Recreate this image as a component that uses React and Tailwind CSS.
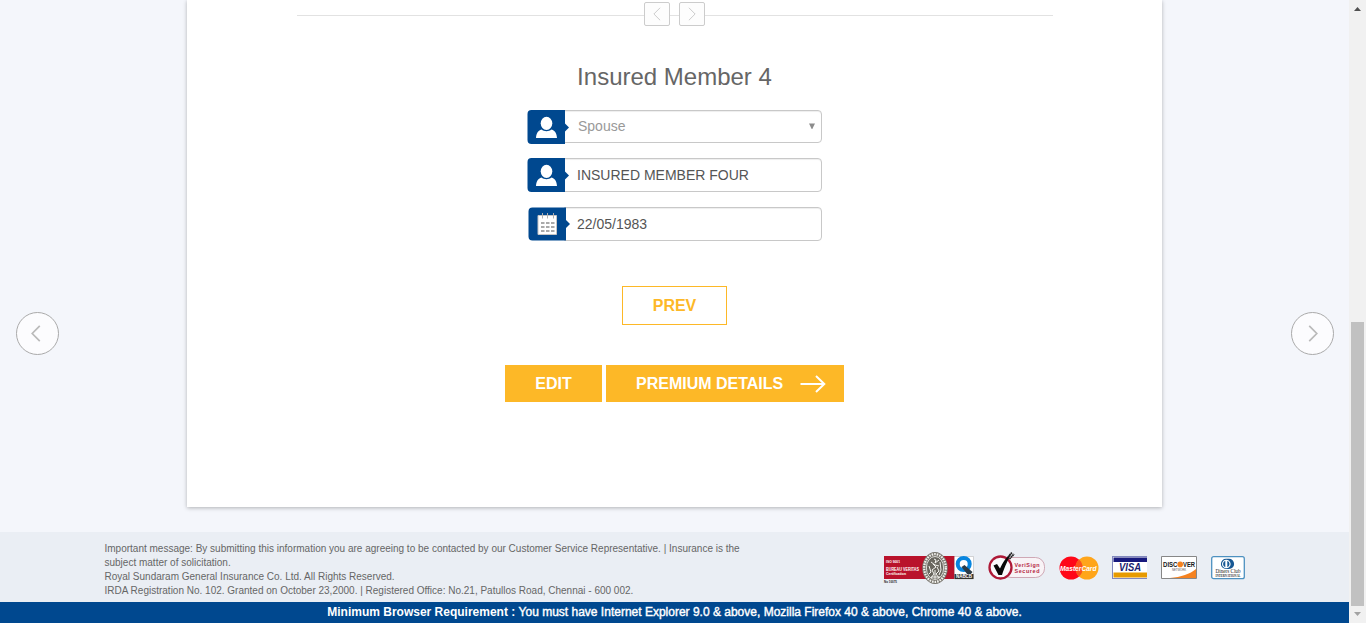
import React from "react";

const Chevron = ({ dir = "left", className }) => (
  <svg viewBox="0 0 10 18" className={className} fill="none" stroke="currentColor">
    <path d={dir === "left" ? "M9 1L1 9l8 8" : "M1 1l8 8-8 8"} />
  </svg>
);

const PersonIcon = () => (
  <svg width="43" height="34" viewBox="0 0 43 34" className="shrink-0">
    <path d="M4.500 0H38v13.500L42 17.500l-4 4V34H4.500Q.5 34 .5 30V4Q.5 0 4.500 0z" fill="#00488f" />
    <ellipse cx="19.500" cy="13.300" rx="5.800" ry="6.600" fill="#fff" />
    <path d="M9 28c.3-4.300 1.800-7.400 5.500-8.500 2.600 2.300 7.400 2.300 10 0C28.200 20.600 29.700 23.700 30 28z" fill="#fff" />
  </svg>
);

const CalendarIcon = () => (
  <svg width="43" height="34" viewBox="0 0 43 34" className="shrink-0">
    <path d="M5.500.5H39v12.500L43 17l-4 4v12.500H5.500q-4 0-4-4v-25q0-4 4-4z" fill="#00488f" />
    <path d="M11 8.500h18.500v19H11z" fill="#fff" stroke="#c5c5c5" strokeWidth="1" />
    <path d="M15.500 6v5.500M20.500 6v5.500M26.500 6v5.500" stroke="#b0b0b0" strokeWidth="1" />
    <path d="M14 16h13.500M14 20h13.500M14 24h13.500" stroke="#aaa" strokeWidth="2" strokeDasharray="3.500 1.500" />
  </svg>
);

const Field = ({ icon, value, select, height = "h-[34px]" }) => (
  <div className="flex h-[34px] w-[295px] items-start">
    <div className="z-10 -mr-[6px] shrink-0">{icon}</div>
    <div
      className={`flex ${height} flex-1 items-center justify-between rounded-r-[4px] border border-[#c8c8c8] bg-white pr-[5px] pl-[12px] shadow-[inset_0_1px_1px_rgba(0,0,0,0.07)]`}
    >
      <span className={select ? "mb-[2px] ml-[1px] text-[14px] leading-5 text-[#999]" : "text-[14px] leading-5 text-[#555]"}>{value}</span>
      {select && (
        <svg width="8" height="7" viewBox="0 0 8 7" className="mb-[1px]">
          <path d="M1 .5h6L4.300 6h-.6z" fill="#8c8c8c" />
        </svg>
      )}
    </div>
  </div>
);

const BureauVeritas = () => (
  <svg width="91" height="34" viewBox="0 0 91 34" fontFamily="Liberation Sans, sans-serif">
    <path d="M1 5h71v23H1z" fill="#b9122b" />
    <g fill="#fff" fontWeight="700">
      <text x="3" y="11.500" fontSize="4" textLength="14" lengthAdjust="spacingAndGlyphs">ISO 9001</text>
      <text x="3" y="19.800" fontSize="4.500" textLength="33" lengthAdjust="spacingAndGlyphs">BUREAU VERITAS</text>
      <text x="3" y="24.300" fontSize="4" textLength="20" lengthAdjust="spacingAndGlyphs">Certification</text>
    </g>
    <text x="1" y="32.300" fontSize="3.500" fontWeight="700" textLength="13" lengthAdjust="spacingAndGlyphs" fill="#222">No 10075</text>
    <path d="M71.500 5.500h19v22.500h-19z" fill="#fff" stroke="#bbb" strokeWidth=".6" />
    <ellipse cx="52" cy="17" rx="12.800" ry="16" fill="#77746c" />
    <ellipse cx="52" cy="17" rx="10.800" ry="13.900" fill="none" stroke="#f1f1ed" strokeWidth="2.300" strokeDasharray="1.600 1" />
    <ellipse cx="52" cy="17" rx="8.600" ry="11.500" fill="#69675f" stroke="#f6f6f2" strokeWidth=".8" />
    <path d="M51 8l2 1-1 3 4-3M48 11l4 3 4 1M50 13l3 3-4 3 2 4-3 4M54 16l2 4-3 3 3 4M46 15l2 6-2 2M52 19v9M57 11l1 8-2 5M48 26h9" fill="none" stroke="#f4f4f0" strokeWidth="1" />
    <circle cx="80.700" cy="13" r="6" fill="none" stroke="#0785df" strokeWidth="4" />
    <path d="M78.500 16l3-2 8 7-2 2.500h-3z" fill="#2b3c49" />
    <path d="M71.500 23h19v5h-19z" fill="#34342f" />
    <text x="73" y="27.400" fontSize="5" fontWeight="700" fill="#fff" textLength="16" lengthAdjust="spacingAndGlyphs">NABCB</text>
  </svg>
);

const VeriSign = () => (
  <svg width="58" height="31" viewBox="0 0 58 31" fontFamily="Liberation Sans, sans-serif">
    <rect x="14" y="6.500" width="42.500" height="20" rx="9" fill="#f8f3f6" stroke="#c795a4" strokeWidth=".8" />
    <circle cx="12.500" cy="16.500" r="11" fill="#f9f9fb" stroke="#ae1937" strokeWidth="2.300" />
    <path d="M5.500 14.500l3.500-1.500 3 4.500C15 11 18 6.500 23.500 2.500c-3 5-7 13.500-9.500 21.500h-3.500z" fill="#080808" />
    <path d="M20 6l4-4.500M21.500 8l4.500-5" stroke="#222" strokeWidth="1.700" strokeDasharray="1.700 .4" />
    <g fill="#b52742" fontSize="5.400" fontWeight="700">
      <text x="26.500" y="15.500" textLength="25">VeriSign</text>
      <text x="26.500" y="21.500" textLength="25">Secured</text>
    </g>
  </svg>
);

const MasterCard = () => (
  <svg width="40" height="24" viewBox="0 0 40 24" className="overflow-visible" fontFamily="Liberation Sans, sans-serif">
    <circle cx="12" cy="12" r="11.500" fill="#ff0718" />
    <circle cx="28" cy="12" r="11.500" fill="#ffa51a" />
    <path d="M20 3.500a11.500 11.500 0 0 1 0 17 11.500 11.500 0 0 1 0-17z" fill="#fb531b" />
    <text x="1" y="14.800" fontSize="7.600" fontWeight="700" fontStyle="italic" fill="#fff" textLength="36.500" lengthAdjust="spacingAndGlyphs">MasterCard</text>
  </svg>
);

const Visa = () => (
  <svg width="35" height="23" viewBox="0 0 35 23" fontFamily="Liberation Sans, sans-serif">
    <path d="M0 0h35v23H0z" fill="#8188bd" />
    <path d="M1 1h34v21H1z" fill="#fff" />
    <path d="M1.500 1.500H35V6H1.500z" fill="#17197d" />
    <path d="M1.500 16.500H35v5H1.500z" fill="#e79a00" />
    <text x="7" y="15.300" fontSize="11" fontWeight="700" fontStyle="italic" fill="#18206e" textLength="22" lengthAdjust="spacingAndGlyphs">VISA</text>
  </svg>
);

const Discover = () => (
  <svg width="36" height="23" viewBox="0 0 36 23" fontFamily="Liberation Sans, sans-serif">
    <path d="M.5.500h35v22H.5z" fill="#fff" stroke="#878787" />
    <path d="M9 22c11-1 20-4 26-9v9z" fill="#f58220" />
    <text x="2" y="11" fontSize="7.200" fontWeight="700" fill="#171717" textLength="14.500" lengthAdjust="spacingAndGlyphs">DISC</text>
    <circle cx="19.200" cy="8.400" r="2.800" fill="#f58220" />
    <text x="22" y="11" fontSize="7.200" fontWeight="700" fill="#171717" textLength="12" lengthAdjust="spacingAndGlyphs">VER</text>
    <text x="11" y="14.500" fontSize="2.800" fill="#555" textLength="14">NETWORK</text>
  </svg>
);

const Diners = () => (
  <svg width="34" height="24" viewBox="0 0 34 24" fontFamily="Liberation Serif, serif">
    <rect x=".7" y=".7" width="32.600" height="22" rx="2" fill="#fff" stroke="#4d91c0" strokeWidth="1.300" />
    <path d="M15 2.800h3a5 5 0 0 1 0 10.200h-3a5 5 0 0 1 0-10.200z" fill="#175895" />
    <circle cx="15.300" cy="8" r="4.300" fill="#fff" />
    <path d="M14.300 4.800a3.400 3.400 0 0 0 0 6.400zM16.300 4.800a3.400 3.400 0 0 1 0 6.400z" fill="#175895" />
    <text x="4.500" y="17.300" fontSize="6.300" fill="#222" textLength="25" lengthAdjust="spacingAndGlyphs">Diners Club</text>
    <text x="4.500" y="20.500" fontSize="3" fontWeight="700" fill="#333" textLength="25" lengthAdjust="spacingAndGlyphs">INTERNATIONAL</text>
  </svg>
);

const RoundButton = ({ dir }) => (
  <button
    aria-label={dir === "left" ? "Previous" : "Next"}
    className="mt-[312px] flex h-[42.500px] w-[42.500px] items-center justify-center rounded-full border border-[#aaa] bg-[#fcfcfe] text-[#bababa]"
  >
    <Chevron dir={dir} className={dir === "left" ? "mr-[2px] h-[17px] w-[10px] stroke-[1.8]" : "ml-[1px] h-[17px] w-[10px] stroke-[1.8]"} />
  </button>
);

const SmallButton = ({ dir }) => (
  <button
    aria-label={dir === "left" ? "Previous member" : "Next member"}
    className="flex h-6 w-[26px] items-center justify-center rounded-[2px] border border-[#ccc] bg-[#fdfdfd] text-[#bdbdbd]"
  >
    <Chevron dir={dir} className="h-[14px] w-[8px]" />
  </button>
);

export default function App() {
  return (
    <div className="flex h-[623px] w-[1366px] overflow-hidden bg-[#f4f6fb] font-['Liberation_Sans',Arial,sans-serif]">
      <div className="flex w-[1349px] flex-col">
        <main className="flex h-[532px] items-start">
          <div className="flex w-[187px] pl-[16px]">
            <RoundButton dir="left" />
          </div>
          <section className="flex h-[507px] w-[975px] flex-col items-center bg-white shadow-[0_1px_4px_rgba(0,0,0,0.28)]">
            <div className="mt-[2px] flex w-[756px] items-center">
              <div className="mt-[2px] h-px w-[347px] bg-[#e2e2e2]" />
              <SmallButton dir="left" />
              <div className="mt-[2px] h-px w-[9px] bg-[#e2e2e2]" />
              <SmallButton dir="right" />
              <div className="mt-[2px] h-px flex-1 bg-[#e2e2e2]" />
            </div>
            <h2 className="mt-[35px] h-8 text-[24px] leading-8 text-[#666]">Insured Member 4</h2>
            <div className="mt-[17px] flex flex-col">
              <Field icon={<PersonIcon />} value="Spouse" select height="h-[33px]" />
              <div className="h-[14px]" />
              <Field icon={<PersonIcon />} value="INSURED MEMBER FOUR" />
              <div className="h-[15px]" />
              <Field icon={<CalendarIcon />} value="22/05/1983" />
            </div>
            <button className="mt-[45px] h-[39px] w-[105px] border border-[#fdb827] text-[16px] font-bold text-[#fdb827]">PREV</button>
            <div className="mt-[40px] flex gap-1 text-[16px] font-bold text-white">
              <button className="h-[37px] w-[97px] bg-[#fdb827]">EDIT</button>
              <button className="flex h-[37px] w-[238px] items-center justify-between bg-[#fdb827] pr-[18px] pl-[30px]">
                PREMIUM DETAILS
                <svg width="26" height="18" viewBox="0 0 26 18" fill="none" stroke="#fff" strokeWidth="2">
                  <path d="M.5 9H24M16 1l8.300 8-8.300 8" />
                </svg>
              </button>
            </div>
          </section>
          <div className="flex w-[187px] pl-[129px]">
            <RoundButton dir="right" />
          </div>
        </main>
        <footer>
          <div className="flex h-[70px] items-start bg-[#eaeef4] pl-[104.500px]">
            <p className="mt-[10px] w-[778.500px] text-[10px] leading-[14px] whitespace-nowrap text-[#666]">
              Important message: By submitting this information you are agreeing to be contacted by our Customer Service Representative. | Insurance is the
              <br />
              subject matter of solicitation.
              <br />
              Royal Sundaram General Insurance Co. Ltd. All Rights Reserved.
              <br />
              IRDA Registration No. 102. Granted on October 23,2000. | Registered Office: No.21, Patullos Road, Chennai - 600 002.
            </p>
            <div className="mt-[19px] flex h-[34px] items-center">
              <BureauVeritas />
              <div className="mb-[3px] ml-[14px]"><VeriSign /></div>
              <div className="ml-[13px]"><MasterCard /></div>
              <div className="mb-[1px] ml-[13px]"><Visa /></div>
              <div className="mb-[1px] ml-[14px]"><Discover /></div>
              <div className="ml-[14px]"><Diners /></div>
            </div>
          </div>
          <p className="h-[21px] bg-[#00488f] text-center text-[12px] leading-[20px] whitespace-nowrap text-white">
            <span className="font-bold">Minimum Browser Requirement : </span>
            <span className="[-webkit-text-stroke:0.4px_white]">
              You must have Internet Explorer 9.0 &amp; above, Mozilla Firefox 40 &amp; above, Chrome 40 &amp; above.
            </span>
          </p>
        </footer>
      </div>
      <div className="flex w-[17px] flex-col items-end justify-between bg-[#f1f1f1] pr-[2px]">
        <svg width="13" height="322" viewBox="0 0 13 322">
          <path d="M6.500 7L10 11H3z" fill="#505050" />
        </svg>
        <div className="h-[284px] w-[13px] bg-[#c1c1c1]" />
        <svg width="13" height="17" viewBox="0 0 13 17">
          <path d="M3 6h7l-3.500 4z" fill="#a3a3a3" />
        </svg>
      </div>
    </div>
  );
}
